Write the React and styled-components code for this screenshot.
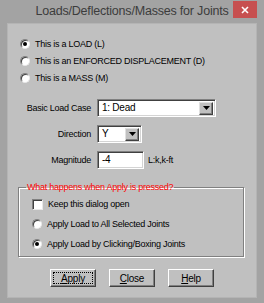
import React from "react";
import styled, { createGlobalStyle } from "styled-components";

const GlobalStyle = createGlobalStyle`
  html, body {
    margin: 0;
    padding: 0;
    background: #a3a3a3;
  }
  * {
    box-sizing: border-box;
  }
`;

const Window = styled.div`
  width: 264px;
  height: 303px;
  background: #a3a3a3;
  display: flex;
  flex-direction: column;
  padding: 0 7px 5px 7px;
  font-family: "Liberation Sans", Arial, sans-serif;
  font-size: 9px;
  letter-spacing: -0.25px;
  color: #000;
`;

const TitleBar = styled.div`
  height: 23px;
  display: grid;
  grid-template-columns: 24px 1fr 24px;
  align-items: start;
`;

const Title = styled.div`
  grid-column: 2;
  text-align: center;
  white-space: nowrap;
  font-family: "Liberation Sans", Arial, sans-serif;
  font-size: 12.5px;
  letter-spacing: -0.2px;
  line-height: 22px;
  color: #3c3c3c;
`;

const CloseButton = styled.div`
  grid-column: 3;
  height: 17px;
  margin-top: 1px;
  background: #c75050;
  display: flex;
  align-items: center;
  justify-content: center;
`;

const Client = styled.div`
  flex: 1;
  background: #c0c0c0;
  border: 1px solid #b4b4b4;
  display: flex;
  flex-direction: column;
  padding-top: 11px;
`;

const RadioList = styled.div`
  display: flex;
  flex-direction: column;
  padding-left: 12px;
`;

const OptionRow = styled.label`
  display: flex;
  align-items: center;
  gap: 5px;
  height: ${p => p.h || 17}px;
  white-space: nowrap;
`;

const RadioDot = styled.span`
  width: 10px;
  height: 10px;
  border-radius: 50%;
  background: #fff;
  border: 1px solid;
  border-color: #808080 #e8e8e8 #e8e8e8 #808080;
  box-shadow: inset 1px 1px 0 #404040;
  display: flex;
  align-items: center;
  justify-content: center;
  flex-shrink: 0;
  &::after {
    content: "";
    width: 4px;
    height: 4px;
    border-radius: 50%;
    background: ${p => (p.checked ? "#000" : "transparent")};
  }
`;

const CheckBox = styled.span`
  width: 11px;
  height: 11px;
  background: #fff;
  border: 1px solid;
  border-color: #808080 #e8e8e8 #e8e8e8 #808080;
  box-shadow: inset 1px 1px 0 #404040;
  flex-shrink: 0;
`;

const Form = styled.div`
  display: grid;
  grid-template-columns: 83px auto;
  column-gap: 6px;
  row-gap: 8px;
  margin-top: 13px;
  align-items: center;
  justify-items: start;
`;

const Label = styled.div`
  justify-self: end;
  white-space: nowrap;
`;

const FieldLine = styled.div`
  display: flex;
  align-items: center;
  gap: 4px;
`;

const Field = styled.div`
  width: ${p => p.w}px;
  height: 18px;
  background: #fff;
  border: 1px solid;
  border-color: #808080 #fff #fff #808080;
  box-shadow: inset 1px 1px 0 #404040, inset -1px -1px 0 #d4d4d4;
  display: flex;
  align-items: center;
  padding: 2px 2px 2px 4px;
`;

const FieldText = styled.span`
  flex: 1;
  line-height: 12px;
  font-size: 10px;
`;

const DropButton = styled.span`
  width: 14px;
  height: 13px;
  background: #c0c0c0;
  border: 1px solid;
  border-color: #e0e0e0 #404040 #404040 #e0e0e0;
  box-shadow: inset -1px -1px 0 #808080;
  display: flex;
  align-items: center;
  justify-content: center;
`;

const Group = styled.fieldset`
  margin: 12px 12px 0 10px;
  padding: 0 0 2px 13px;
  border: 1px solid #808080;
  box-shadow: inset 1px 1px 0 #fff, 1px 1px 0 #fff;
  min-width: 0;
`;

const Legend = styled.legend`
  color: #ff0000;
  padding: 0 1px;
  margin-left: -6px;
  line-height: 13px;
`;

const ButtonRow = styled.div`
  display: flex;
  justify-content: center;
  gap: 13px;
  margin-top: 12px;
`;

const Button = styled.div`
  width: 46px;
  height: 18px;
  background: #c0c0c0;
  border: 1px solid;
  border-color: #fff #404040 #404040 #fff;
  box-shadow: inset -1px -1px 0 #808080;
  display: flex;
  align-items: center;
  justify-content: center;
  font-size: 10px;
  outline: ${p => (p.focused ? "1px dotted #000" : "none")};
  outline-offset: -4px;
  u {
    text-decoration: underline;
  }
`;

const Arrow = () => (
  <svg width="7" height="4" viewBox="0 0 7 4">
    <path d="M0 0h7L3.5 4z" fill="#000" />
  </svg>
);

const Select = ({ w, value }) => (
  <Field w={w}>
    <FieldText>{value}</FieldText>
    <DropButton>
      <Arrow />
    </DropButton>
  </Field>
);

export default function App() {
  return (
    <>
      <GlobalStyle />
      <Window>
        <TitleBar>
          <Title>Loads/Deflections/Masses for Joints</Title>
          <CloseButton>
            <svg width="8" height="8" viewBox="0 0 8 8">
              <path d="M1 1L7 7M7 1L1 7" stroke="#fff" strokeWidth="1.6" />
            </svg>
          </CloseButton>
        </TitleBar>
        <Client>
          <RadioList>
            <OptionRow>
              <RadioDot checked />
              This is a LOAD (L)
            </OptionRow>
            <OptionRow>
              <RadioDot />
              This is an ENFORCED DISPLACEMENT (D)
            </OptionRow>
            <OptionRow>
              <RadioDot />
              This is a MASS (M)
            </OptionRow>
          </RadioList>

          <Form>
            <Label>Basic Load Case</Label>
            <Select w={119} value="1: Dead" />
            <Label>Direction</Label>
            <Select w={45} value="Y" />
            <Label>Magnitude</Label>
            <FieldLine>
              <Field w={47}>
                <FieldText>-4</FieldText>
              </Field>
              L:k,k-ft
            </FieldLine>
          </Form>

          <Group>
            <Legend>What happens when Apply is pressed?</Legend>
            <OptionRow h={20}>
              <CheckBox />
              Keep this dialog open
            </OptionRow>
            <OptionRow h={20}>
              <RadioDot />
              Apply Load to All Selected Joints
            </OptionRow>
            <OptionRow h={20}>
              <RadioDot checked />
              Apply Load by Clicking/Boxing Joints
            </OptionRow>
          </Group>

          <ButtonRow>
            <Button focused>
              <span><u>A</u>pply</span>
            </Button>
            <Button>
              <span><u>C</u>lose</span>
            </Button>
            <Button>
              <span><u>H</u>elp</span>
            </Button>
          </ButtonRow>
        </Client>
      </Window>
    </>
  );
}
